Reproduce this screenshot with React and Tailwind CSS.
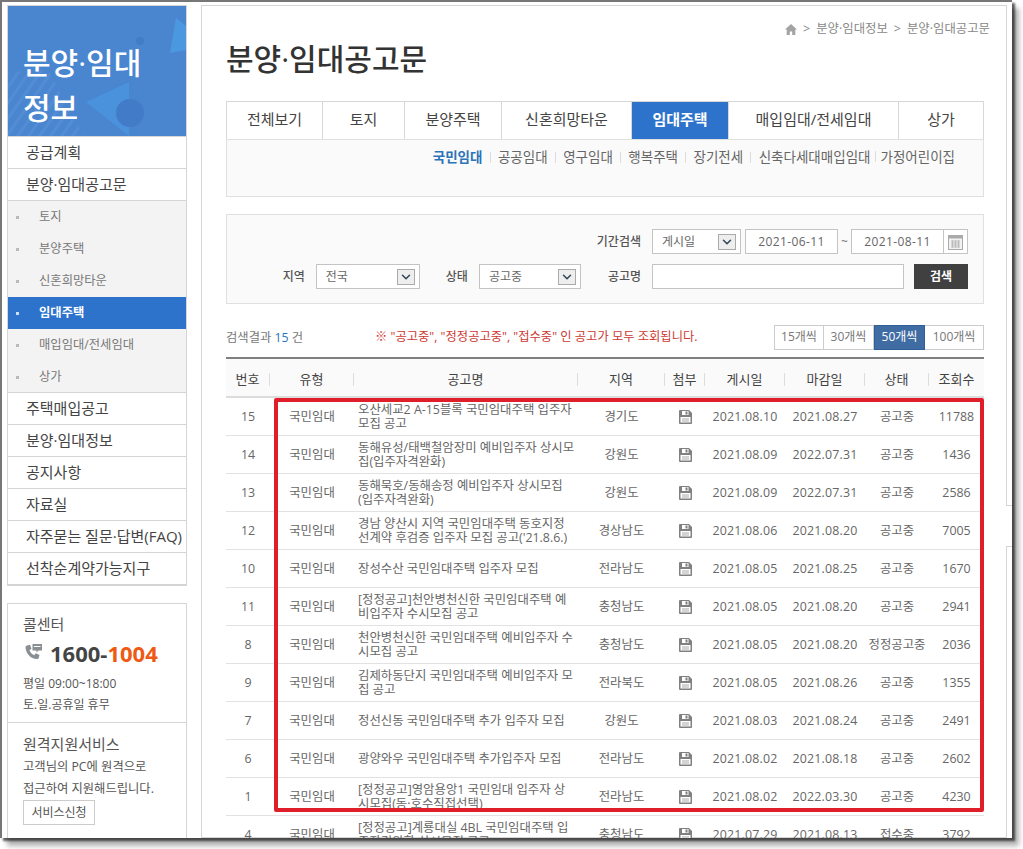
import { ChevronDown } from 'lucide-react';

const sideTop = ['공급계획', '분양·임대공고문'];
const sideSub = ['토지', '분양주택', '신혼희망타운', '임대주택', '매입임대/전세임대', '상가'];
const sideBottom = ['주택매입공고', '분양·임대정보', '공지사항', '자료실', '자주묻는 질문·답변(FAQ)', '선착순계약가능지구'];

const tabs = [
  { label: '전체보기', w: 'w-[97px]' },
  { label: '토지', w: 'w-[82px]' },
  { label: '분양주택', w: 'w-[97px]' },
  { label: '신혼희망타운', w: 'w-[130px]' },
  { label: '임대주택', w: 'w-[97px]', active: true },
  { label: '매입임대/전세임대', w: 'w-[170px]' },
  { label: '상가', w: 'w-[85px]' },
];

const subTabs = ['공공임대', '영구임대', '행복주택', '장기전세', '신축다세대매입임대'];

const rows = [
  ['15', '오산세교2 A-15블록 국민임대주택 입주자\n모집 공고', '경기도', '2021.08.10', '2021.08.27', '공고중', '11788'],
  ['14', '동해유성/태백철암장미 예비입주자 상시모\n집(입주자격완화)', '강원도', '2021.08.09', '2022.07.31', '공고중', '1436'],
  ['13', '동해묵호/동해송정 예비입주자 상시모집\n(입주자격완화)', '강원도', '2021.08.09', '2022.07.31', '공고중', '2586'],
  ['12', "경남 양산시 지역 국민임대주택 동호지정\n선계약 후검증 입주자 모집 공고('21.8.6.)", '경상남도', '2021.08.06', '2021.08.20', '공고중', '7005'],
  ['10', '장성수산 국민임대주택 입주자 모집', '전라남도', '2021.08.05', '2021.08.25', '공고중', '1670'],
  ['11', '[정정공고]천안병천신한 국민임대주택 예\n비입주자 수시모집 공고', '충청남도', '2021.08.05', '2021.08.20', '공고중', '2941'],
  ['8', '천안병천신한 국민임대주택 예비입주자 수\n시모집 공고', '충청남도', '2021.08.05', '2021.08.20', '정정공고중', '2036'],
  ['9', '김제하동단지 국민임대주택 예비입주자 모\n집 공고', '전라북도', '2021.08.05', '2021.08.26', '공고중', '1355'],
  ['7', '정선신동 국민임대주택 추가 입주자 모집', '강원도', '2021.08.03', '2021.08.24', '공고중', '2491'],
  ['6', '광양와우 국민임대주택 추가입주자 모집', '전라남도', '2021.08.02', '2021.08.18', '공고중', '2602'],
  ['1', '[정정공고]영암용앙1 국민임대 입주자 상\n시모집(동·호수직접선택)', '전라남도', '2021.08.02', '2022.03.30', '공고중', '4230'],
  ['4', '[정정공고]계룡대실 4BL 국민임대주택 입\n주자격완화 상시모집 공고', '충청남도', '2021.07.29', '2021.08.13', '접수중', '3792'],
];

const columns = [
  { label: '번호', w: 'w-[44px]' },
  { label: '유형', w: 'w-[84px]' },
  { label: '공고명', w: 'w-[224px]' },
  { label: '지역', w: 'w-[87px]' },
  { label: '첨부', w: 'w-[40px]' },
  { label: '게시일', w: 'w-[80px]' },
  { label: '마감일', w: 'w-[80px]' },
  { label: '상태', w: 'w-[64px]' },
  { label: '조회수', w: 'w-[55px]' },
];

const SaveIcon = () => (
  <svg width="13" height="14" viewBox="0 0 13 14" className="mx-auto block">
    <path fill="#808080" d="M0 1a1 1 0 0 1 1-1h9l3 3v10a1 1 0 0 1-1 1H1a1 1 0 0 1-1-1z" />
    <rect x="3" y="1" width="6.500" height="4" fill="#fff" />
    <rect x="6.500" y="1.500" width="2" height="3" fill="#808080" />
    <rect x="1.500" y="7" width="10" height="5.500" fill="#fff" />
    <rect x="3" y="8.500" width="7" height="1" fill="#aaa" />
    <rect x="3" y="10.500" width="7" height="1" fill="#aaa" />
  </svg>
);

const HomeIcon = () => (
  <svg width="12" height="11" viewBox="0 0 12 11" fill="#a3a3a3">
    <path d="M6 0 12 5.500h-1.700V11H7.200V7.500H4.800V11H1.700V5.500H0z" />
  </svg>
);

const PhoneIcon = () => (
  <svg width="20" height="20" viewBox="0 0 20 20">
    <path fill="#8a8f94" d="M4 2.500 7 1.800l1.500 4-2 1.500c.8 2.300 2.400 3.900 4.700 4.900l1.600-1.900 3.700 1.700-.8 3c-.2.800-.9 1.200-1.800 1.100C7.600 15.500 3.100 10.700 2.500 4.400c-.1-.9.600-1.700 1.500-1.900z" />
    <path fill="#8a8f94" d="M9.500 1h9.500v6.500h-3.500l-2 2v-2h-4z" />
    <rect x="11" y="3" width="6.500" height="1" fill="#fff" />
  </svg>
);

const CalendarIcon = () => (
  <svg width="15" height="16" viewBox="0 0 15 16">
    <rect x="0.500" y="1.500" width="14" height="14" fill="#f2f2f2" stroke="#aaa" />
    <rect x="0.500" y="1.500" width="14" height="3" fill="#aaa" />
    <path stroke="#bbb" d="M3 7h9M3 9h9M3 11h9M3 13h9M4.500 6.500v7M7.500 6.500v7M10.500 6.500v7" />
  </svg>
);

const Select = ({ value, className }) => (
  <div className={`flex h-[25px] items-center justify-between border border-[#c4c4c4] bg-white pl-[9px] pr-[4px] text-[12px] text-[#666] ${className}`}>
    <span>{value}</span>
    <span className="flex h-[16px] w-[18px] items-center justify-center border border-[#aaa] bg-[#eee]">
      <ChevronDown size={14} strokeWidth={2.6} className="text-[#33475b]" />
    </span>
  </div>
);

const Sidebar = () => (
  <aside className="w-[180px] shrink-0">
    <div className="border-x border-[#d5d5d5] text-[#444]">
      <div className="relative h-[132px] overflow-hidden border-b border-t border-[#d5d5d5] bg-[#4a86d0] pl-[15px] pt-[34px] text-[30px] font-medium leading-[45px] text-white">
        <svg className="absolute left-0 top-0" width="178" height="130" viewBox="0 0 178 130">
          <defs>
            <pattern id="stripes" width="9" height="9" patternUnits="userSpaceOnUse" patternTransform="rotate(35)">
              <rect width="3" height="9" fill="#5b93d8" />
            </pattern>
          </defs>
          <path d="M0 66 68 130H0z M0 66l40-2 36 66H40z" fill="url(#stripes)" opacity=".5" />
          <path d="M78 96 121 76v54z" fill="#4a92dc" />
          <circle cx="122" cy="107" r="14" fill="#427bc8" />
          <circle cx="132" cy="35" r="4" fill="#427bc8" />
          <path d="M168 12 178 20v24l-16 3z" fill="#4c98e0" />
        </svg>
        <div className="relative">분양·임대<br />정보</div>
      </div>
      {sideTop.map((label) => (
        <div key={label} className="flex h-[32px] items-center border-b border-[#d5d5d5] bg-white pl-[18px] text-[15px]">
          {label}
        </div>
      ))}
      <ul className="bg-[#f3f3f3]">
        {sideSub.map((label) => {
          const active = label === '임대주택';
          return (
            <li key={label} className={`flex h-[32px] items-center pt-[1px] text-[12.3px] last:border-b last:border-[#d5d5d5] ${active ? 'bg-[#2d73cc] font-bold text-white' : 'text-[#777]'}`}>
              <span className={`ml-[8px] mr-[20px] size-[3px] ${active ? 'bg-[#cfe0f5]' : 'bg-[#bbb]'}`} />
              {label}
            </li>
          );
        })}
      </ul>
      {sideBottom.map((label) => (
        <div key={label} className="flex h-[32px] items-center whitespace-nowrap border-b border-[#d5d5d5] bg-white pl-[18px] text-[15px]">
          {label}
        </div>
      ))}
      <div className="h-px bg-[#d5d5d5]" />
    </div>

    <div className="mt-[17px] h-[300px] border border-[#d5d5d5] text-[#555]">
      <div className="h-[119px] border-b border-[#d5d5d5] px-[15px] pt-[9px]">
        <div className="text-[15px] leading-[22px]">콜센터</div>
        <div className="mt-[3px] flex items-center gap-[7px]">
          <PhoneIcon />
          <div className="text-[22px] font-bold leading-[30px] text-[#444]">
            1600-<span className="text-[#ee5a14]">1004</span>
          </div>
        </div>
        <div className="mt-[5px] text-[12px] leading-[21px]">평일 09:00~18:00</div>
        <div className="text-[12px] leading-[21px]">토.일.공휴일 휴무</div>
      </div>
      <div className="px-[15px] pt-[10px]">
        <div className="text-[15px] leading-[22px]">원격지원서비스</div>
        <div className="mt-[1px] text-[12.3px] leading-[22px]">
          고객님의 PC에 원격으로<br />접근하여 지원해드립니다.
        </div>
        <div className="flex h-[25px] w-[72px] items-center justify-center border border-[#ccc] text-[12px]">서비스신청</div>
      </div>
    </div>
  </aside>
);

const TabMenu = () => (
  <>
    <div className="flex h-[38px] border-t border-[#d8d8d8] text-[15px] text-[#444]">
      {tabs.map((tab, i) => (
        <div
          key={tab.label}
          className={`flex items-center justify-center pb-[2px] ${tab.w} ${i === 0 ? 'border-l border-[#d8d8d8]' : ''} border-r border-[#d8d8d8] ${tab.active ? 'bg-[#2d73cc] font-bold text-white' : 'bg-white'}`}
        >
          {tab.label}
        </div>
      ))}
    </div>
    <div className="flex h-[58px] items-start justify-end border border-[#e0e0e0] bg-[#fafafa] pr-[28px] pt-[7px] text-[13.5px] leading-[20px] text-[#666]">
      <span className="font-bold text-[#2d73b8]">국민임대</span>
      {subTabs.map((label) => (
        <span key={label} className="flex items-center">
          <span className="mx-[7.25px] h-[11px] w-px bg-[#ddd]" />
          {label}
        </span>
      ))}
      <span className="mx-[4.5px] mt-[4px] h-[11px] w-px bg-[#ddd]" />
      <span>가정어린이집</span>
    </div>
  </>
);

const SearchBox = () => (
  <div className="mt-[17px] flex h-[90px] flex-col justify-center gap-[10px] border border-[#e0e0e0] bg-[#fafafa] pr-[15px] text-[12px] text-[#555]">
    <div className="flex items-center justify-end">
      <span className="mr-[11px] font-medium">기간검색</span>
      <Select value="게시일" className="w-[89px]" />
      <input readOnly value="2021-06-11" className="ml-[4px] h-[25px] w-[93px] border border-[#c4c4c4] bg-white text-center text-[12px] tracking-[0.4px] text-[#666]" />
      <span className="ml-[3px] mr-[4px] w-[6px] text-[#777]">~</span>
      <input readOnly value="2021-08-11" className="h-[25px] w-[93px] border border-[#c4c4c4] bg-white text-center text-[12px] tracking-[0.4px] text-[#666]" />
      <span className="flex h-[25px] w-[24px] items-center justify-center border border-l-0 border-[#c4c4c4] bg-white">
        <CalendarIcon />
      </span>
    </div>
    <div className="flex items-center justify-end">
      <span className="mr-[11px] font-medium">지역</span>
      <Select value="전국" className="w-[104px]" />
      <span className="ml-[26px] mr-[11px] font-medium">상태</span>
      <Select value="공고중" className="w-[102px]" />
      <span className="ml-[27px] mr-[11px] font-medium">공고명</span>
      <input readOnly className="h-[25px] w-[252px] border border-[#c4c4c4] bg-white" />
      <button className="ml-[10px] h-[25px] w-[54px] bg-[#404040] text-[12px] font-bold text-white">검색</button>
    </div>
  </div>
);

const ResultBar = () => (
  <div className="mt-[20px] flex h-[26px] items-center text-[12.3px]">
    <div className="w-[149px] pt-[2px] text-[#777]">
      검색결과 <span className="text-[#2d73b8]">15</span> 건
    </div>
    <div className="flex-1 pt-[1px] text-[#cc3a33]">※ "공고중", "정정공고중", "접수중" 인 공고가 모두 조회됩니다.</div>
    <div className="flex text-[12px] text-[#777]">
      <div className="flex h-[25px] w-[50px] items-center justify-center border border-[#ccc] bg-white">15개씩</div>
      <div className="flex h-[25px] w-[50px] items-center justify-center border border-l-0 border-[#ccc] bg-white">30개씩</div>
      <div className="flex h-[25px] w-[51px] items-center justify-center border border-[#2f5d96] bg-[#3f6ca3] text-white">50개씩</div>
      <div className="flex h-[25px] w-[59px] items-center justify-center border border-l-0 border-[#ccc] bg-white">100개씩</div>
    </div>
  </div>
);

const NoticeTable = () => (
  <div className="relative mt-[7px] border-t-2 border-[#808080]">
    <table className="w-[758px] table-fixed border-separate border-spacing-0 text-center text-[12.4px] text-[#666]">
      <colgroup>
        {columns.map((col) => (
          <col key={col.label} className={col.w} />
        ))}
      </colgroup>
      <thead>
        <tr>
          {columns.map((col, i) => (
            <th key={col.label} className="h-[39px] border-b-2 border-[#dcdcdc] bg-[#fafafa] p-0 pt-[4px] text-[13px] font-normal text-[#444]">
              <div className={`h-[13px] leading-[13px] ${i === columns.length - 1 ? '' : 'border-r border-[#ddd]'}`}>{col.label}</div>
            </th>
          ))}
        </tr>
      </thead>
      <tbody>
        {rows.map(([no, title, area, posted, closes, status, views]) => (
          <tr key={no}>
            <td className="h-[38px] border-b border-[#e2e2e2] p-0 pt-[1px]">{no}</td>
            <td className="border-b border-[#e2e2e2] p-0 pt-[1px]">국민임대</td>
            <td className="whitespace-pre border-b border-[#e2e2e2] p-0 pl-[4px] pt-[1px] text-left leading-[14.5px]">{title}</td>
            <td className="border-b border-[#e2e2e2] p-0 pt-[1px]">{area}</td>
            <td className="border-b border-[#e2e2e2] p-0"><SaveIcon /></td>
            <td className="border-b border-[#e2e2e2] p-0 pt-[1px] tracking-[0.2px]">{posted}</td>
            <td className="border-b border-[#e2e2e2] p-0 pt-[1px] tracking-[0.2px]">{closes}</td>
            <td className="border-b border-[#e2e2e2] p-0 pt-[1px]">{status}</td>
            <td className="border-b border-[#e2e2e2] p-0 pt-[1px]">{views}</td>
          </tr>
        ))}
      </tbody>
    </table>
    {/* red highlight drawn over the screenshot */}
    <div className="pointer-events-none absolute left-[48px] top-[39px] h-[414px] w-[710px] rounded-[2px] border-[4px] border-[#e01e2a]" />
  </div>
);

const App = () => {
  return (
    <div className="h-[849px] w-[1023px] overflow-hidden bg-white font-['Open_Sans','Noto_Sans_CJK_KR',sans-serif]">
      <div className="relative flex h-[838px] w-[1012px] gap-[14px] overflow-hidden border-2 border-b-0 border-r-0 border-[#777] bg-white pl-[5px] pt-[3px] shadow-[3px_3px_2px_rgba(0,0,0,0.6),7px_8px_5px_rgba(0,0,0,0.3)]">
        <Sidebar />
        <main className="w-[806px] shrink-0 border border-[#d5d5d5] pl-[24px] pr-[22px]">
          <div className="-mr-[6px] flex h-[46px] items-center justify-end gap-[6px] text-[12.4px] text-[#888]">
            <HomeIcon />
            <span>&gt;</span>
            <span>분양·임대정보</span>
            <span>&gt;</span>
            <span>분양·임대공고문</span>
          </div>
          <h1 className="-mt-[8px] h-[57px] text-[30px] font-medium leading-[30px] text-[#333]">분양·임대공고문</h1>
          <TabMenu />
          <SearchBox />
          <ResultBar />
          <NoticeTable />
        </main>
        <div className="absolute left-[1004px] top-[503px] h-[42px] w-[6px] border-y border-[#d5d5d5] bg-white" />
      </div>
    </div>
  );
};

export default App;
